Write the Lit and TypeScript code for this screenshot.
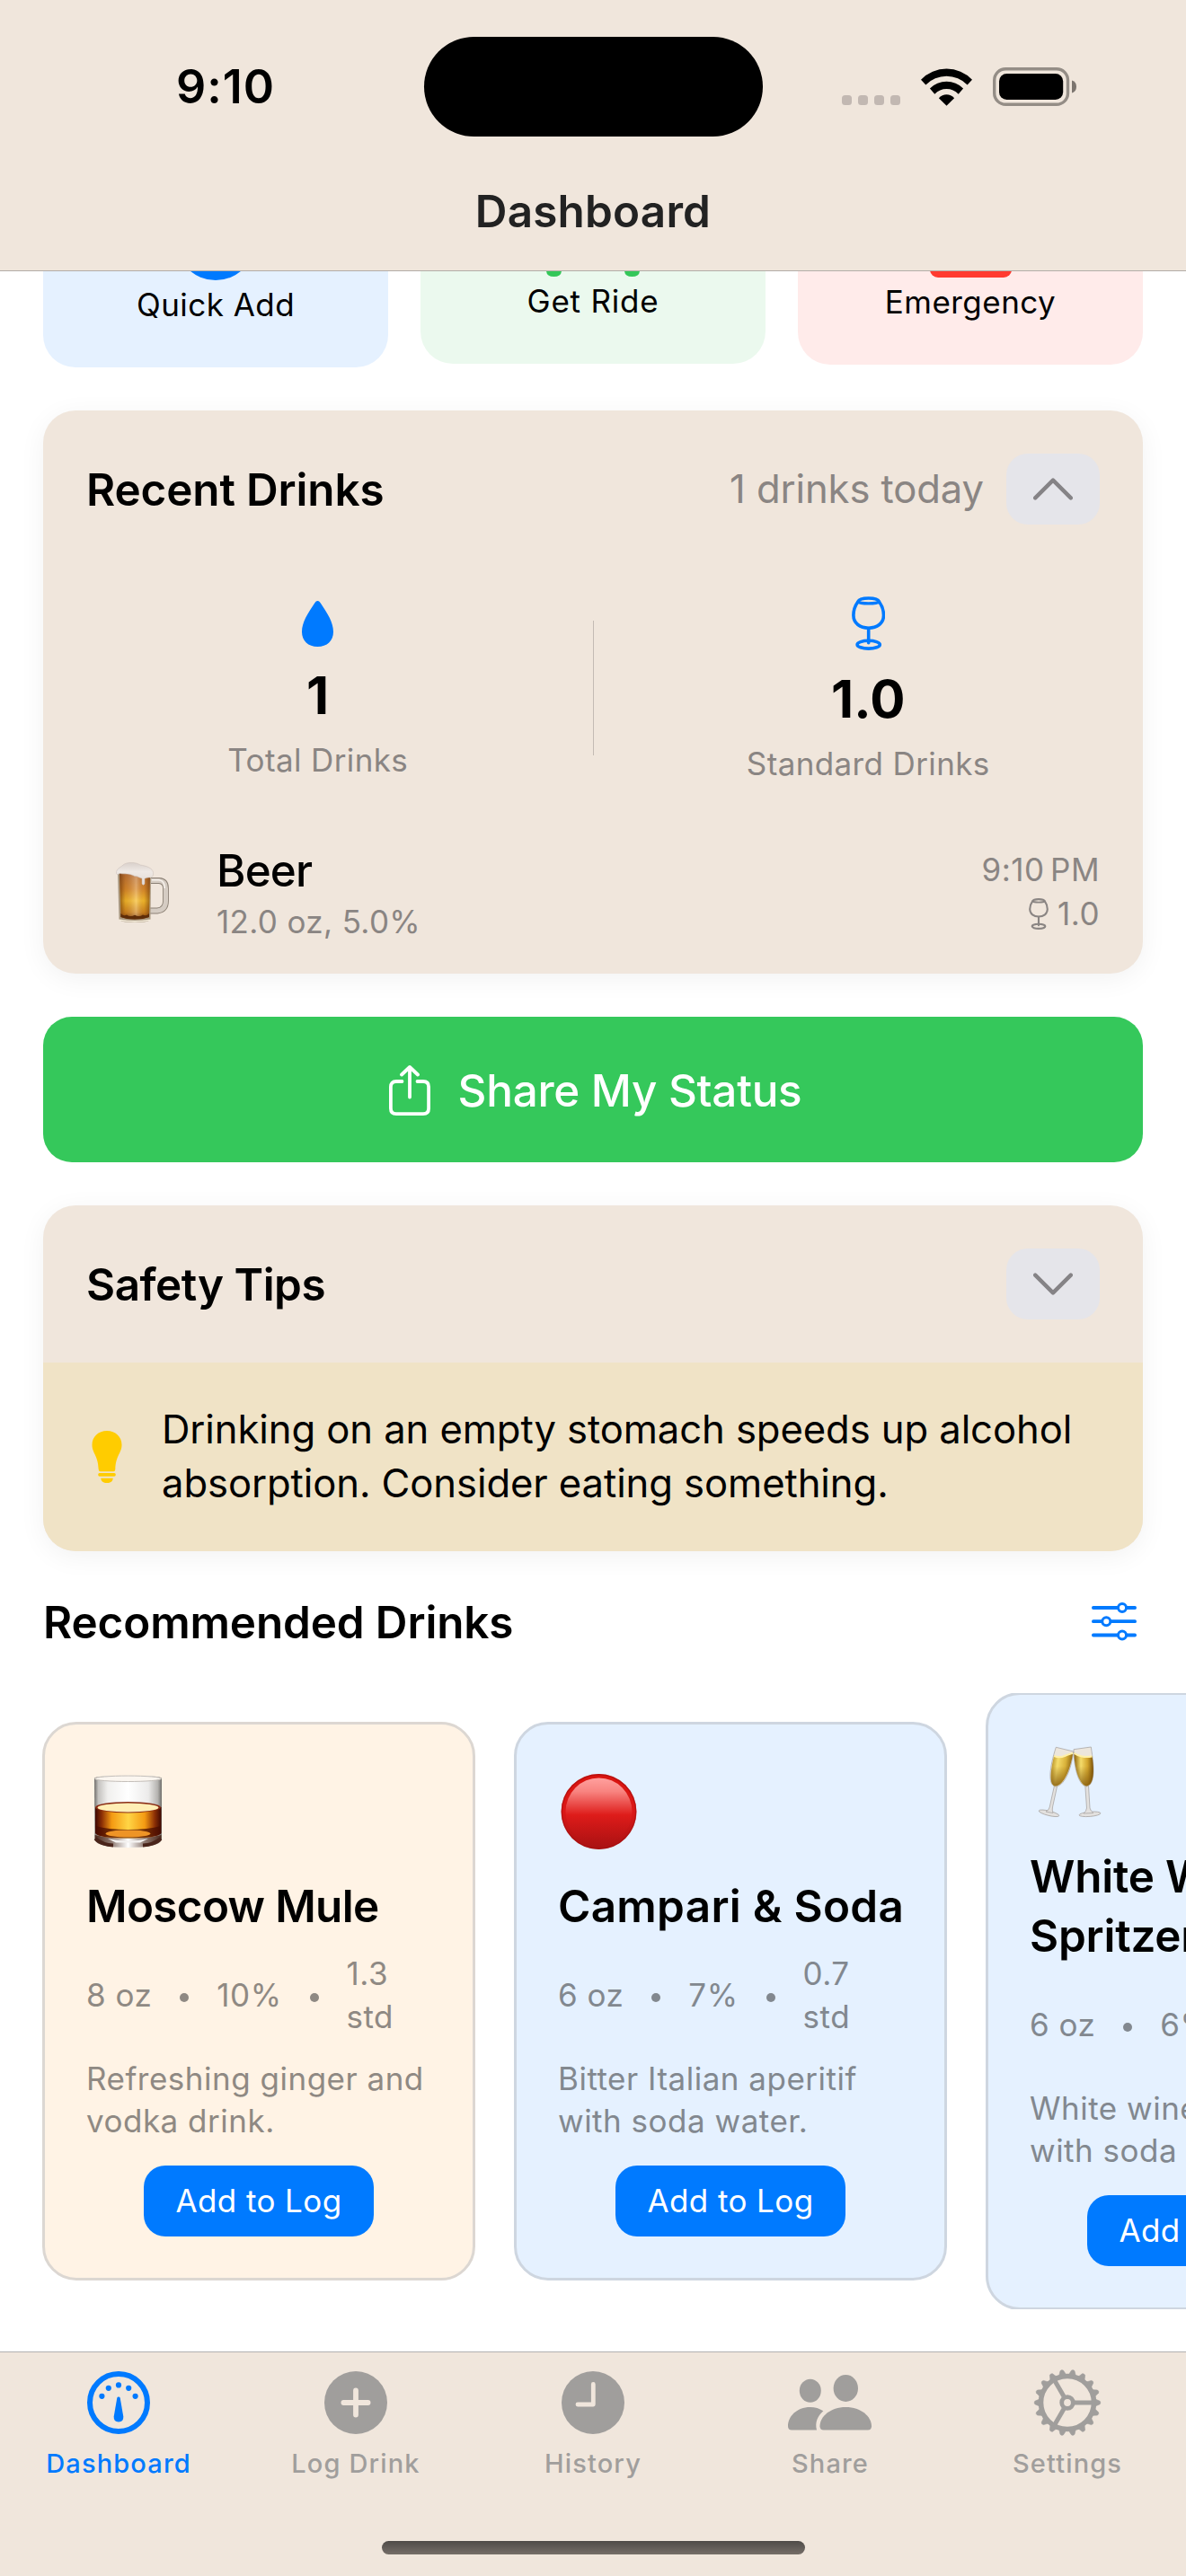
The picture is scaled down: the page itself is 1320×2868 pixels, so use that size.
import { LitElement, html, svg, css, TemplateResult } from "lit";
import { customElement, property, state } from "lit/decorators.js";

/* ---------- Icons ---------- */

const wifiIcon = html`<svg width="57" height="42" viewBox="0 0 57.4 42" fill="#000">
  <path d="M0 12.7A39.8 39.8 0 0 1 57.4 12.7L52 18.4A32.8 32.8 0 0 0 5.4 18.4Z" />
  <path d="M10 22.4A26.8 26.8 0 0 1 47.4 22.4L42 28.7A18.6 18.6 0 0 0 15.4 28.7Z" />
  <path d="M20 33.3C24.6 28 32.8 28 37.4 33.3L28.7 42Z" />
</svg>`;

const batteryIcon = html`<svg width="94" height="43" viewBox="0 0 94 43">
  <rect x="1.7" y="1.7" width="81.8" height="39.6" rx="12.5" fill="none" stroke="#948d86" stroke-width="3.4" />
  <rect x="7" y="7" width="71.2" height="29" rx="8.5" fill="#000" />
  <path d="M88 14.5Q93 16 93 21.5T88 28.5Z" fill="#7c756f" />
</svg>`;

const plusCircle = (size: number) => html`<svg width=${size} height=${size} viewBox="-35 -35 70 70">
  <circle r="35" fill="currentColor" />
  <path d="M-13.6 0H13.6M0-13.6V13.6" stroke="var(--cut)" stroke-width="5.8" stroke-linecap="round" />
</svg>`;

const carIcon = html`<svg width="110" height="86" viewBox="0 0 110 86" fill="currentColor">
  <path d="M22 8Q24 2 31 2H79Q86 2 88 8L96 30Q106 33 106 44V66H4V44Q4 33 14 30Z" />
  <path d="M3 60H20V79Q20 86 11.500 86T3 79ZM90 60H107V79Q107 86 98.500 86T90 79Z" />
</svg>`;

const beaconIcon = html`<svg width="91" height="86" viewBox="0 0 91 86" fill="currentColor">
  <path d="M16 56V40Q16 10 45.500 10T75 40V56Z" />
  <rect x="0" y="62" width="91" height="24" rx="9" />
</svg>`;

const chevron = (up: boolean) => html`<svg width="44" height="25" viewBox="0 0 44 25" fill="none" stroke="#858386" stroke-width="4.400" stroke-linecap="round" stroke-linejoin="round">
  <path d=${up ? "M2.200 22.400L22 2.600L41.800 22.400" : "M2.200 2.600L22 22.400L41.800 2.600"} />
</svg>`;

const dropIcon = html`<svg width="35" height="51" viewBox="0 0 35 51" fill="#007aff">
  <path d="M17.500 0C19 0 20 1.200 21 2.800C28.500 14 35 24 35 34.500C35 44.500 28 51 17.500 51S0 44.500 0 34.500C0 24 6.500 14 14 2.800C15 1.200 16 0 17.500 0Z" />
</svg>`;

const wineIcon = (w: number, h: number, color: string) => html`<svg width=${w} height=${h} viewBox="0 0 37.400 60" fill="none" stroke=${color} stroke-width="3.600" stroke-linecap="round">
  <path d="M7 5.800C8.200 2.600 13 2 18.700 2S29.200 2.600 30.400 5.800C33.800 10.500 35.500 16 35.500 21C35.500 30 28 35.200 18.700 35.200S1.900 30 1.900 21C1.900 16 3.600 10.500 7 5.800Z" />
  <path d="M7 6C9.500 8.500 27.900 8.500 30.400 6" stroke-width="3.200" />
  <path d="M18.700 35.500V51.800" />
  <ellipse cx="18.700" cy="53.700" rx="12.600" ry="4.400" />
</svg>`;

const shareIcon = html`<svg width="46" height="56" viewBox="0 0 46 56" fill="none" stroke="#fff" stroke-width="3.800" stroke-linecap="round" stroke-linejoin="round">
  <path d="M23 35.500V2.500M14 10.500L23 2L32 10.500" />
  <path d="M14.500 18H8Q1.900 18 1.900 24V48Q1.900 54.100 8 54.100H38Q44.100 54.100 44.100 48V24Q44.100 18 38 18H31.500" />
</svg>`;

const bulbIcon = html`<svg width="34" height="58" viewBox="0 0 34 58" fill="#ffcc00">
  <path d="M17 0C26.500 0 33.500 6.500 33.500 15.500C33.500 25 26.800 27 26.300 43Q26.200 45.200 24.300 45.200H9.700Q7.800 45.200 7.700 43C7.200 27 .5 25 .5 15.500C.5 6.500 7.500 0 17 0Z" />
  <rect x="7.200" y="47" width="19.600" height="3.700" rx="1.700" />
  <path d="M10.300 52.700H23.700C23.700 56 21 58 17 58S10.300 56 10.300 52.700Z" />
</svg>`;

const slidersIcon = html`<svg width="50" height="42.500" viewBox="0 0 50 42.500" stroke="#007aff" stroke-width="3.800" stroke-linecap="round">
  <path d="M1.900 6H48.100M1.900 21.200H48.100M1.900 36.500H48.100" />
  <g fill="#fff" stroke-width="2.900"><circle cx="34" cy="6" r="4.500" /><circle cx="16.300" cy="21.200" r="4.500" /><circle cx="34" cy="36.500" r="4.500" /></g>
</svg>`;

const gaugeIcon = html`<svg width="100" height="80" viewBox="-50 -40 100 80" fill="currentColor">
  <circle r="32" fill="none" stroke="currentColor" stroke-width="6" />
  <circle cx="-18.600" cy="-7.200" r="3.100" /><circle cx="-11.200" cy="-16.200" r="3.100" /><circle cx="0" cy="-19.600" r="3.100" />
  <circle cx="11.200" cy="-16.200" r="3.100" /><circle cx="18.600" cy="-7.200" r="3.100" />
  <path d="M-1.700 -5.200Q-1.400 -6.600 0 -6.600T1.700 -5.200L5.300 15.500Q5.600 21.400 0 21.400T-5.300 15.500Z" />
</svg>`;

const clockIcon = html`<svg width="100" height="80" viewBox="-50 -40 100 80">
  <circle r="35" fill="currentColor" />
  <path d="M.3 -20.500V2H-17" fill="none" stroke="var(--cut)" stroke-width="4.800" stroke-linecap="round" stroke-linejoin="round" />
</svg>`;

const peopleIcon = html`<svg width="100" height="80" viewBox="-50 -40 100 80" fill="currentColor">
  <ellipse cx="-22.200" cy="-13.300" rx="12" ry="13" />
  <ellipse cx="17.300" cy="-16" rx="13.700" ry="15" />
  <path d="M17.300 5C34.500 5 46 15.500 46 26.300Q46 30.500 41.800 30.500H-7.300Q-11.500 30.500 -11.500 26.300C-11.500 15.500 .2 5 17.300 5Z" />
  <path d="M-22.200 5C-16.800 5 -12 6.500 -7.700 9.300C-14 14.800 -17.200 22 -15 30.500H-42.800Q-47 30.500 -47 26.300C-47 15.500 -37.500 5 -22.200 5Z" />
</svg>`;

const gearIcon = html`<svg width="100" height="80" viewBox="-50 -40 100 80" fill="none" stroke="currentColor">
  <circle r="29.500" stroke-width="5.600" />
  <circle r="6.300" stroke-width="4.800" />
  ${[0, 120, 240].map((a) => svg`<path d="M8 0H28" stroke-width="5" transform="rotate(${a})" />`)}
  ${Array.from({ length: 18 }, (_, i) => svg`<path d="M31 -4L36.200 -1.700Q37.600 0 36.200 1.700L31 4Z" fill="currentColor" stroke-width=".6" transform="rotate(${i * 20})" />`)}
</svg>`;

/* ---------- Drink pictures ---------- */

const beerPic = html`<svg width="60" height="68" viewBox="0 0 60 68">
  <defs>
    <linearGradient id="ale" x1="0" y1="0" x2="0" y2="1"><stop offset="0" stop-color="#b9703a" /><stop offset=".35" stop-color="#d98a2b" /><stop offset=".6" stop-color="#f6bd2c" /><stop offset=".85" stop-color="#cf851f" /><stop offset="1" stop-color="#7b3d0c" /></linearGradient>
    <linearGradient id="side" x1="0" y1="0" x2="1" y2="0"><stop offset="0" stop-color="#5d2c06" stop-opacity=".65" /><stop offset=".2" stop-color="#7a3c08" stop-opacity=".15" /><stop offset=".55" stop-color="#fff" stop-opacity=".28" /><stop offset=".8" stop-color="#7a3c08" stop-opacity=".1" /><stop offset="1" stop-color="#5d2c06" stop-opacity=".6" /></linearGradient>
    <linearGradient id="foam" x1="0" y1="0" x2="0" y2="1"><stop offset="0" stop-color="#d9d0cb" /><stop offset=".4" stop-color="#efe9e5" /><stop offset="1" stop-color="#e2dad5" /></linearGradient>
  </defs>
  <path d="M39 20.500H48Q55.500 21 55.500 29V43Q55.500 53 46 54H38" fill="none" stroke="#8b8075" stroke-width="6.800" />
  <path d="M39 20.500H48Q55.500 21 55.500 29V43Q55.500 53 46 54H38" fill="none" stroke="#d5ccc3" stroke-width="5" />
  <path d="M40 19.800H48Q54.300 20.500 54.300 29" fill="none" stroke="#f6f1ec" stroke-width="1.500" />
  <path d="M2 12L3.500 63Q4 67 21 67T38.500 63L39 14Z" fill="#a99880" />
  <path d="M4 12L5.500 61Q12 63.500 21 63.500T37 61L38 14Z" fill="url(#ale)" />
  <path d="M4 12L5.500 61Q12 63.500 21 63.500T37 61L38 14Z" fill="url(#side)" />
  <path d="M5.500 57Q8.500 60.500 12 58.500Q16 61.500 21 58.800Q26 61.500 30 58.500Q34 60.500 37 57V61Q30 63.500 21 63.500T5.500 61Z" fill="#5e2c08" />
  <path d="M4 64.300Q21 67.500 38 64.300" fill="none" stroke="#f3ead9" stroke-width="1.600" />
  <path d="M.5 12.500C0 7 5 6 8 3C12 -.5 22 -.5 27 3C34 4 41 6.500 41.500 11.500C42 15 40 17.500 38 17C35 16.500 33 18 32 18V24Q30.500 26.500 29 24V18C25 17 24 15 21 15.500C15 12 9 13.500 5 12.500C3 12 2 15 .5 12.500Z" fill="url(#foam)" stroke="#c6bbb4" stroke-width=".5" />
</svg>`;

const whiskyPic = html`<svg width="92" height="84" viewBox="0 0 92 84">
  <defs>
    <linearGradient id="glassWall" x1="0" y1="0" x2="1" y2="0"><stop offset="0" stop-color="#6f6d6a" /><stop offset=".06" stop-color="#c4c2bf" /><stop offset=".2" stop-color="#f1f0ee" /><stop offset=".5" stop-color="#fff" /><stop offset=".8" stop-color="#ecebea" /><stop offset=".94" stop-color="#b5b3b0" /><stop offset="1" stop-color="#6f6d6a" /></linearGradient>
    <linearGradient id="whisky" x1="0" y1="0" x2="1" y2="0"><stop offset="0" stop-color="#3f0802" /><stop offset=".1" stop-color="#8c2f05" /><stop offset=".25" stop-color="#f49a12" /><stop offset=".5" stop-color="#ffd545" /><stop offset=".75" stop-color="#f49a12" /><stop offset=".9" stop-color="#8c2f05" /><stop offset="1" stop-color="#3f0802" /></linearGradient>
    <linearGradient id="base" x1="0" y1="0" x2="1" y2="0"><stop offset="0" stop-color="#4d2a1d" /><stop offset=".25" stop-color="#8e7a72" /><stop offset=".5" stop-color="#fff" /><stop offset=".75" stop-color="#8e7a72" /><stop offset="1" stop-color="#4d2a1d" /></linearGradient>
  </defs>
  <path d="M9 5Q9 1.700 46.500 1.700T84 5V73Q82 82 46.500 82T9.500 73Z" fill="url(#glassWall)" />
  <path d="M9.700 68Q46.500 76 83.500 68V73.500Q80 82 46.500 82T9.700 73.500Z" fill="url(#base)" />
  <path d="M10 72Q18 79 30 79.500M83 72Q75 79 63 79.500" stroke="#4a241a" stroke-width="4" fill="none" />
  <path d="M10 37H83.500V66Q80 71.500 46.500 71.500T10 66Z" fill="url(#whisky)" />
  <path d="M10.500 58Q24 62 46.500 62T83 58V66Q78 71.500 46.500 71.500T10.500 66Z" fill="#4a0d02" opacity=".75" />
  <ellipse cx="46.500" cy="66.500" rx="25" ry="4" fill="#ee9426" />
  <path d="M24 72Q46 77 69 72L60 76.500H33Z" fill="#f4f2f1" />
  <ellipse cx="46.500" cy="37.200" rx="36.500" ry="6.200" fill="#8a2c14" />
  <ellipse cx="46.500" cy="37.500" rx="34" ry="4.900" fill="#ffeeb5" />
  <ellipse cx="46.500" cy="5.300" rx="37" ry="3.200" fill="#fbf6f0" stroke="#bdb8b2" stroke-width=".9" />
</svg>`;

const redCirclePic = html`<svg width="92" height="84" viewBox="0 0 92 84">
  <defs>
    <linearGradient id="ball" x1="0" y1="0" x2="0" y2="1"><stop offset="0" stop-color="#d9140f" /><stop offset=".5" stop-color="#db1817" /><stop offset="1" stop-color="#a81213" /></linearGradient>
    <linearGradient id="gloss" x1="0" y1="0" x2="0" y2="1"><stop offset="0" stop-color="#ffa09e" /><stop offset=".2" stop-color="#f88480" /><stop offset=".55" stop-color="#de1c1a" /><stop offset="1" stop-color="#b41314" stop-opacity="0" /></linearGradient>
  </defs>
  <circle cx="45.500" cy="42" r="41.900" fill="url(#ball)" />
  <circle cx="45.500" cy="42" r="41.200" fill="none" stroke="#a50d0e" stroke-width="1.400" opacity=".6" />
  <ellipse cx="45.500" cy="42" rx="37" ry="37.500" fill="url(#gloss)" />
</svg>`;

const cheersPic = html`<svg width="92" height="84" viewBox="0 0 92 84">
  <defs>
    <linearGradient id="bubblyL" x1="0" y1="0" x2="1" y2=".2"><stop offset="0" stop-color="#a57a12" /><stop offset=".35" stop-color="#f5dc6b" /><stop offset=".7" stop-color="#d9b23a" /><stop offset="1" stop-color="#8a600d" /></linearGradient>
    <linearGradient id="bubblyR" x1="0" y1="0" x2="1" y2="0"><stop offset="0" stop-color="#8a600d" /><stop offset=".35" stop-color="#f5dc6b" /><stop offset=".7" stop-color="#d3a52d" /><stop offset="1" stop-color="#7a5109" /></linearGradient>
    <linearGradient id="depth" x1="0" y1="0" x2="0" y2="1"><stop offset=".4" stop-color="#7a5008" stop-opacity="0" /><stop offset="1" stop-color="#7a5008" stop-opacity=".75" /></linearGradient>
  </defs>
  <g stroke="#a9a6a4" stroke-width=".8" fill="#e3e1df">
    <ellipse cx="21.500" cy="76.800" rx="11.600" ry="2.600" transform="rotate(14 21.500 76.800)" />
    <ellipse cx="67" cy="77.800" rx="12" ry="2.600" transform="rotate(-5 67 77.800)" />
    <path d="M27.500 46L22.200 70Q21 74 18 75L26 76.500Q24.800 73 25.500 70L30.500 47Z" />
    <path d="M61.800 46L63.500 71Q63 75 60 77L71 76.500Q67.500 74 67 71L65.500 46Z" />
    <path d="M29.300 3.300L48.700 8C46 30 38 47 28.500 47C20 45 22 26 29.300 3.300Z" fill="#ece6dc" />
    <path d="M49 5.700L68.300 3C72 26 73 45 63.300 47C54 46 49 24 49 5.700Z" fill="#ece6dc" />
  </g>
  <path d="M27.200 12.500Q33 15 39 12.500T48.200 9.500C46 26 38 46.500 28.500 46.500C21.500 45.500 23 30 27.200 12.500Z" fill="url(#bubblyL)" />
  <path d="M27.200 12.500Q33 15 39 12.500T48.200 9.500C46 26 38 46.500 28.500 46.500C21.500 45.500 23 30 27.200 12.500Z" fill="url(#depth)" />
  <path d="M49.400 9.500Q53 12 58 13T69.500 13C72 28 72 45 63.300 46.500C55 45 49.800 26 49.400 9.500Z" fill="url(#bubblyR)" />
  <path d="M49.400 9.500Q53 12 58 13T69.500 13C72 28 72 45 63.300 46.500C55 45 49.800 26 49.400 9.500Z" fill="url(#depth)" />
  <path d="M27.200 13Q33 15.500 39 13T48.200 10M49.400 10Q53 12.500 58 13.500T69.500 13.500" fill="none" stroke="#fff0a8" stroke-width="2" />
</svg>`;

/* ---------- Data ---------- */

interface Drink {
  name: string;
  pic: TemplateResult;
  size: string;
  abv: string;
  std: string;
  text: string;
  tone: string;
}

const drinks: Drink[] = [
  { name: "Moscow Mule", pic: whiskyPic, size: "8 oz", abv: "10%", std: "1.3 std", text: "Refreshing ginger and vodka drink.", tone: "warm" },
  { name: "Campari & Soda", pic: redCirclePic, size: "6 oz", abv: "7%", std: "0.7 std", text: "Bitter Italian aperitif with soda water.", tone: "cool" },
  { name: "White Wine Spritzer", pic: cheersPic, size: "6 oz", abv: "6%", std: "0.6 std", text: "White wine\nwith soda water.", tone: "cool tall" },
];

const tabs: { label: string; icon: TemplateResult }[] = [
  { label: "Dashboard", icon: gaugeIcon },
  { label: "Log Drink", icon: plusCircle(70) },
  { label: "History", icon: clockIcon },
  { label: "Share", icon: peopleIcon },
  { label: "Settings", icon: gearIcon },
];

/* ---------- Elements ---------- */

@customElement("drink-card")
export class DrinkCard extends LitElement {
  @property({ attribute: false }) drink!: Drink;

  static styles = css`
    :host { display: block; flex: none; width: 482px; }
    .card { box-sizing: border-box; width: 482px; padding: 55px 46px 46px; border: 3px solid #d6d6d9; border-radius: 38px; }
    .warm { background: #fff3e5; border-color: #dcd7d2; }
    .cool { background: #e5f1ff; border-color: #ced6e0; }
    svg { display: block; }
    .name { margin: 30px -24px 0 0; font-size: 49.4px; font-weight: 600; line-height: 66px; color: #000; }
    .warm .name { letter-spacing: -0.65px; }
    .cool .name { letter-spacing: 0.3px; }
    .tall .name { letter-spacing: -0.2px; }
    .facts { display: flex; align-items: center; gap: 31px; margin-top: 18px; height: 96px; font-size: 35px; line-height: 48px; letter-spacing: 0.5px; color: #8f8983; }
    .cool .facts, .cool .text { color: #82888f; }
    .fixed { flex: none; }
    .dot { flex: none; width: 10px; height: 10px; margin-top: 7px; border-radius: 50%; background: currentColor; }
    .text { margin-top: 22px; font-size: 35px; line-height: 47.5px; letter-spacing: 0.5px; white-space: pre-line; color: #8f8983; }
    .add { display: block; width: 256px; height: 79px; margin: 25px auto 0; padding: 0; border: 0; border-radius: 24px; background: #007aff; color: #fff; font: 400 35px/79px Inter, sans-serif; letter-spacing: 0.4px; text-align: center; }
  `;

  render() {
    const d = this.drink;
    return html`<article class="card ${d.tone}">
      ${d.pic}
      <div class="name">${d.name}</div>
      <div class="facts">
        <span class="fixed">${d.size}</span><i class="dot"></i><span class="fixed">${d.abv}</span><i class="dot"></i><span>${d.std}</span>
      </div>
      <div class="text">${d.text}</div>
      <button class="add">Add to Log</button>
    </article>`;
  }
}

@customElement("app-root")
export class AppRoot extends LitElement {
  @state() private activeTab = "Dashboard";

  static styles = css`
    :host { display: block; font-family: Inter, "Liberation Sans", sans-serif; color: #000; --sand: #f0e6dc; }
    .screen { display: flex; flex-direction: column; width: 1320px; height: 2868px; overflow: hidden; background: #fff; }
    svg { display: block; flex: none; }
    button { padding: 0; border: 0; font: inherit; color: inherit; background: none; }

    .header { flex: none; box-sizing: border-box; height: 302px; padding-top: 41px; background: var(--sand); border-bottom: 1px solid #b2aca7; }
    .status { display: grid; grid-template-columns: 471.5px 377px 1fr; align-items: center; height: 111px; }
    .time { padding-left: 196px; font-size: 52px; font-weight: 600; line-height: 66px; letter-spacing: 1px; }
    .island { height: 111px; border-radius: 56px; background: #000; }
    .signals { display: flex; align-items: center; padding-left: 88.5px; }
    .cell { width: 11px; height: 11px; margin: 30px 7px 0 0; border-radius: 3.5px; background: #c2b8b2; }
    .wifi { margin-left: 16px; }
    .battery { margin-left: 23px; }
    .title { margin-top: 52px; font-size: 49.4px; font-weight: 600; line-height: 62px; letter-spacing: 0.2px; text-align: center; color: #222; }

    .main { flex: none; height: 2316px; overflow: hidden; }
    .scroll { display: flex; flex-direction: column; gap: 48px; margin-top: -110px; padding: 0 48px; }

    .quick { display: flex; align-items: flex-start; gap: 36px; height: 217px; }
    .tile { box-sizing: border-box; display: flex; flex: 1; flex-direction: column; align-items: center; justify-content: flex-end; gap: 6px; padding-bottom: 48px; border-radius: 36px; font-size: 35px; line-height: 43px; letter-spacing: 0.45px; }
    .tile span { color: #000; }
    .add { height: 217px; background: #e5f1ff; color: #007aff; --cut: #e5f1ff; }
    .ride { height: 213px; background: #ebf9ee; color: #34c759; letter-spacing: 0.8px; }
    .sos { height: 214px; background: #ffebea; color: #ff3b30; }

    .card { border-radius: 36px; background: var(--sand); box-shadow: 0 6px 30px rgba(0, 0, 0, 0.055); }
    .head { display: flex; align-items: center; height: 79px; padding: 48px; }
    .head h2, .rec h2 { flex: 1; margin: 0; font-size: 49.4px; font-weight: 600; line-height: 62px; letter-spacing: -0.12px; }
    .head .tight { letter-spacing: -0.46px; }
    .count { font-size: 43.6px; line-height: 60px; letter-spacing: -0.1px; color: #8a8583; }
    .toggle { display: flex; align-items: center; justify-content: center; width: 104px; height: 79px; margin-left: 25px; border-radius: 24px; background: #e5e5ea; }

    .totals { display: grid; grid-template-columns: 1fr 1px 1fr; height: 306px; }
    .total { display: flex; flex-direction: column; align-items: center; padding-top: 37px; }
    .total.std { padding-top: 32px; }
    .num { margin-top: 18px; font-size: 58.2px; font-weight: 700; line-height: 72px; letter-spacing: 0.2px; }
    .lab { margin-top: 15px; font-size: 35px; line-height: 43px; letter-spacing: 0.38px; color: #8a8583; }
    .rule { height: 150px; margin-top: 59px; background: #c3bbb4; }
    .entry { display: flex; align-items: flex-start; height: 146px; padding: 0 48px; font-size: 35px; line-height: 43px; color: #8a8583; }
    .mug { box-sizing: border-box; width: 145px; padding: 22px 0 0 33px; }
    .info { flex: 1; letter-spacing: 0.36px; }
    .what { margin-bottom: 5px; font-size: 49.4px; font-weight: 500; line-height: 62px; letter-spacing: -0.8px; color: #000; }
    .when { display: flex; flex-direction: column; align-items: flex-end; gap: 6px; margin-top: 8.5px; letter-spacing: 0.5px; }
    .clock { word-spacing: -4px; }
    .units { display: flex; align-items: center; gap: 10px; }

    .share { display: flex; align-items: center; justify-content: center; gap: 31px; height: 162px; padding: 2px 0 0 5px; box-sizing: border-box; border-radius: 32px; background: #35c85b; color: #fff; font-size: 49.4px; font-weight: 500; line-height: 62px; letter-spacing: -0.29px; }

    .clip { border-radius: 36px; overflow: hidden; }
    .tip { display: flex; align-items: flex-start; box-sizing: border-box; height: 209.5px; padding: 44.5px 48px 0 54px; background: #f0e3c6; }
    .bulb { width: 78px; padding-top: 31.5px; }
    .tip p { flex: 1; margin: 0; font-size: 43.6px; line-height: 60.5px; letter-spacing: -0.09px; }

    .rec { display: flex; align-items: center; height: 62px; padding-right: 7px; }
    .row { display: flex; align-items: center; gap: 43px; margin: 0 -48px 0 -1px; height: 686px; overflow: hidden; }

    .tabbar { flex: none; box-sizing: border-box; display: flex; flex-direction: column; height: 250px; border-top: 1px solid #b2b1b2; background: var(--sand); --cut: var(--sand); }
    .tabs { display: grid; grid-template-columns: repeat(5, 264px); height: 210px; }
    .tab { display: flex; flex-direction: column; align-items: center; padding-top: 16px; color: #a09e9c; font-size: 29px; font-weight: 500; line-height: 36px; letter-spacing: 1.15px; }
    .tab.on { color: #007aff; }
    .glyph { display: flex; align-items: center; height: 80px; margin-bottom: 10px; }
    .home { width: 471px; height: 15px; margin-left: 425px; border-radius: 8px; background: linear-gradient(#4f4b48, #756e68); }
  `;

  render() {
    return html`<div class="screen">
      <header class="header">
        <div class="status">
          <div class="time">9:10</div>
          <div class="island"></div>
          <div class="signals">
            <i class="cell"></i><i class="cell"></i><i class="cell"></i><i class="cell"></i>
            <span class="wifi">${wifiIcon}</span>
            <span class="battery">${batteryIcon}</span>
          </div>
        </div>
        <div class="title">Dashboard</div>
      </header>

      <main class="main">
        <div class="scroll">
          <section class="quick">
            <div class="tile add">${plusCircle(88)}<span>Quick Add</span></div>
            <div class="tile ride">${carIcon}<span>Get Ride</span></div>
            <div class="tile sos">${beaconIcon}<span>Emergency</span></div>
          </section>

          <section class="card">
            <div class="head">
              <h2>Recent Drinks</h2>
              <span class="count">1 drinks today</span>
              <button class="toggle">${chevron(true)}</button>
            </div>
            <div class="totals">
              <div class="total">${dropIcon}<div class="num">1</div><div class="lab">Total Drinks</div></div>
              <div class="rule"></div>
              <div class="total std">${wineIcon(37.4, 60, "#007aff")}<div class="num">1.0</div><div class="lab">Standard Drinks</div></div>
            </div>
            <div class="entry">
              <div class="mug">${beerPic}</div>
              <div class="info"><div class="what">Beer</div><div>12.0 oz, 5.0%</div></div>
              <div class="when">
                <div class="clock">9:10 PM</div>
                <div class="units">${wineIcon(22, 35, "#8a8583")}<span>1.0</span></div>
              </div>
            </div>
          </section>

          <button class="share">${shareIcon}<span>Share My Status</span></button>

          <section class="card">
            <div class="clip">
              <div class="head">
                <h2 class="tight">Safety Tips</h2>
                <button class="toggle">${chevron(false)}</button>
              </div>
              <div class="tip">
                <div class="bulb">${bulbIcon}</div>
                <p>Drinking on an empty stomach speeds up alcohol absorption. Consider eating something.</p>
              </div>
            </div>
          </section>

          <div class="rec"><h2>Recommended Drinks</h2>${slidersIcon}</div>

          <div class="row">${drinks.map((d) => html`<drink-card .drink=${d}></drink-card>`)}</div>
        </div>
      </main>

      <nav class="tabbar">
        <div class="tabs">
          ${tabs.map(
            (t) => html`<div class="tab ${t.label === this.activeTab ? "on" : ""}" @click=${() => (this.activeTab = t.label)}>
              <div class="glyph">${t.icon}</div>
              <span>${t.label}</span>
            </div>`
          )}
        </div>
        <div class="home"></div>
      </nav>
    </div>`;
  }
}
